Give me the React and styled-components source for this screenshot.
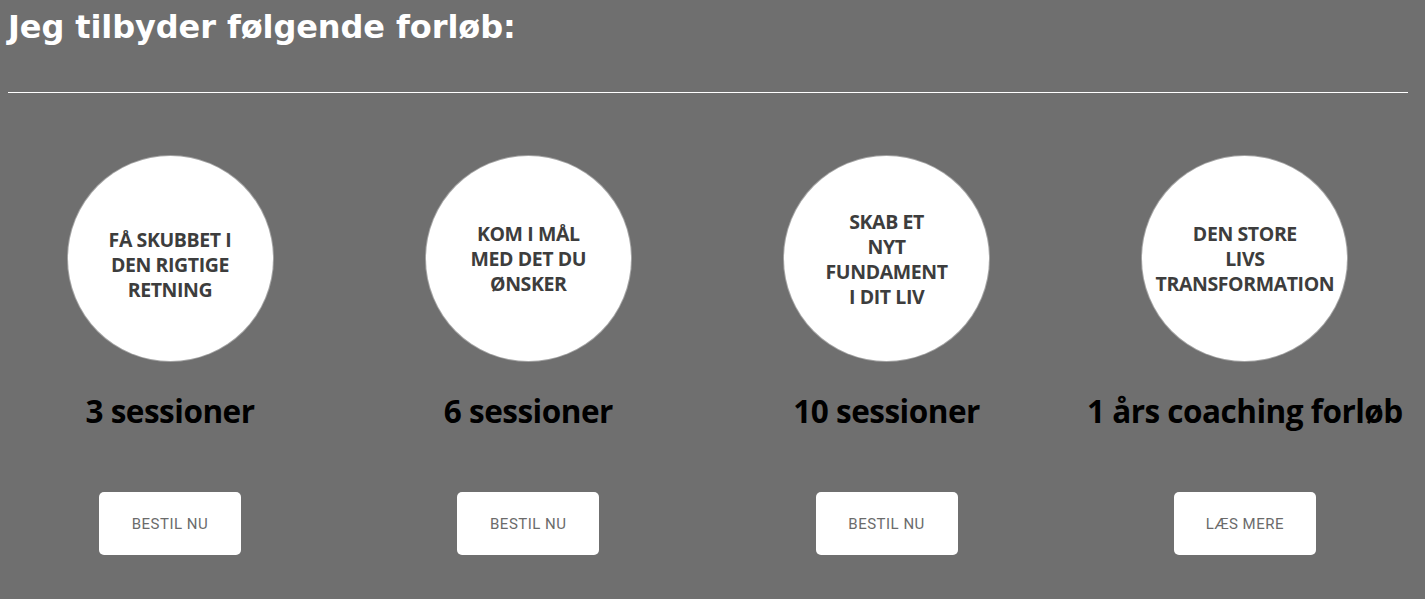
import React from 'react';
import styled, { createGlobalStyle } from 'styled-components';

const GlobalStyle = createGlobalStyle`
    html, body {
        margin: 0;
        padding: 0;
        background: #6f6f6f;
    }
`;

const Page = styled.div`
    width: 1425px;
    height: 599px;
    background: #6f6f6f;
    overflow: hidden;
    padding: 0 17px 0 8px;
    box-sizing: border-box;
`;

const Title = styled.h2`
    margin: 0;
    padding-top: 6px;
    font-family: "DejaVu Sans", Inter, sans-serif;
    font-weight: 700;
    font-size: 32px;
    line-height: 42px;
    letter-spacing: -0.1px;
    color: #ffffff;
`;

const Divider = styled.hr`
    margin: 44px 0 0 0;
    border: none;
    border-top: 1px solid #ffffff;
    height: 0;
`;

const Offers = styled.div`
    display: grid;
    grid-template-columns: repeat(4, 240px);
    column-gap: 118.3px;
    padding: 63px 0 0 42px;
`;

const Offer = styled.div`
    display: flex;
    flex-direction: column;
    align-items: center;
`;

const Circle = styled.div`
    width: 205px;
    height: 205px;
    border-radius: 50%;
    background: #ffffff;
    box-shadow: 0 0 0 1px rgba(200, 200, 200, 0.6);
    display: flex;
    align-items: center;
    justify-content: center;
    padding-top: ${p => p.$shift * 2}px;
    box-sizing: border-box;
`;

const CircleText = styled.div`
    font-family: "Open Sans", "Noto Sans", sans-serif;
    font-weight: 700;
    font-size: 19.5px;
    line-height: 25px;
    letter-spacing: -0.4px;
    text-align: center;
    color: #3d3d3d;
`;

const Sessions = styled.h3`
    margin: 30px 0 0 0;
    font-family: "Open Sans", "Noto Sans", sans-serif;
    font-weight: 700;
    font-size: 31.5px;
    line-height: 40px;
    letter-spacing: -0.5px;
    color: #000000;
    white-space: nowrap;
`;

const Button = styled.a`
    margin-top: 61px;
    width: 142px;
    height: 63px;
    border-radius: 5px;
    background: #ffffff;
    display: flex;
    align-items: center;
    justify-content: center;
    font-family: Roboto, "Noto Sans", sans-serif;
    font-size: 15px;
    letter-spacing: 0.5px;
    color: #6b6b6b;
    text-decoration: none;
    text-transform: uppercase;
    cursor: pointer;
`;

const offers = [
    { lines: ['FÅ SKUBBET I', 'DEN RIGTIGE', 'RETNING'], shift: 6, title: '3 sessioner', cta: 'Bestil nu' },
    { lines: ['KOM I MÅL', 'MED DET DU', 'ØNSKER'], shift: -1, title: '6 sessioner', cta: 'Bestil nu' },
    { lines: ['SKAB ET', 'NYT', 'FUNDAMENT', 'I DIT LIV'], shift: -4, title: '10 sessioner', cta: 'Bestil nu' },
    { lines: ['DEN STORE', 'LIVS', 'TRANSFORMATION'], shift: -3, title: '1 års coaching forløb', cta: 'Læs mere' },
];

const App = () => {
    return (
        <>
        <GlobalStyle />
        <Page>
            <Title>Jeg tilbyder følgende forløb:</Title>
            <Divider />
            <Offers>
                {offers.map(item => (
                    <Offer key={item.title}>
                        <Circle $shift={item.shift}>
                            <CircleText>
                                {item.lines.map(line => <div key={line}>{line}</div>)}
                            </CircleText>
                        </Circle>
                        <Sessions>{item.title}</Sessions>
                        <Button>{item.cta}</Button>
                    </Offer>
                ))}
            </Offers>
        </Page>
        </>
    )
}

export default App;
